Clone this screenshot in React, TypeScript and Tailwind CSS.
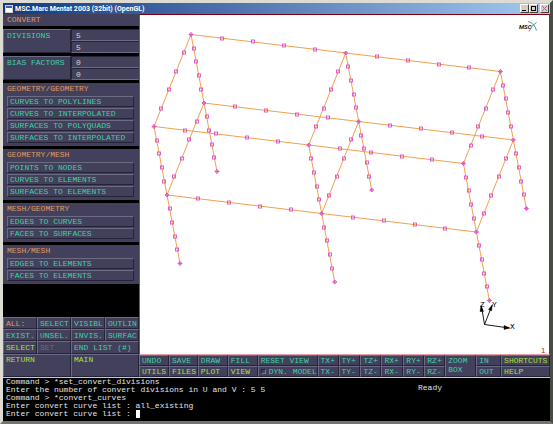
import { useState } from "react";

type Tone = "green" | "lime" | "orange" | "dim";
type Point = [number, number];

interface PanelButtonProps {
  label: string;
  tone?: Tone;
  className?: string;
}

interface FieldGroupProps {
  title: string;
  name: string;
  defaults: string[];
}

interface ConvertGroupProps {
  title: string;
  actions: string[];
}

const tones: Record<Tone, string> = {
  green: "text-[#3fd0a8]",
  lime: "text-[#a8e23c]",
  orange: "text-[#e09a62]",
  dim: "text-[#6c6a80]",
};

const bevel =
  "border border-t-[#6c6b85] border-l-[#6c6b85] border-r-[#24233a] border-b-[#24233a]";

const groups: ConvertGroupProps[] = [
  {
    title: "GEOMETRY/GEOMETRY",
    actions: [
      "CURVES TO POLYLINES",
      "CURVES TO INTERPOLATED",
      "SURFACES TO POLYQUADS",
      "SURFACES TO INTERPOLATED",
    ],
  },
  {
    title: "GEOMETRY/MESH",
    actions: ["POINTS TO NODES", "CURVES TO ELEMENTS", "SURFACES TO ELEMENTS"],
  },
  {
    title: "MESH/GEOMETRY",
    actions: ["EDGES TO CURVES", "FACES TO SURFACES"],
  },
  {
    title: "MESH/MESH",
    actions: ["EDGES TO ELEMENTS", "FACES TO ELEMENTS"],
  },
];

// Labels on the narrow buttons hold six characters
const selectors: PanelButtonProps[] = [
  { label: "ALL:", tone: "orange" },
  { label: "SELECT" },
  { label: "VISIBL" },
  { label: "OUTLIN" },
  { label: "EXIST." },
  { label: "UNSEL." },
  { label: "INVIS." },
  { label: "SURFAC" },
  { label: "SELECT", tone: "lime" },
  { label: "SET", tone: "dim" },
  { label: "END LIST (#)", className: "col-span-2" },
  { label: "RETURN", tone: "lime", className: "col-span-2 items-start" },
  { label: "MAIN", tone: "lime", className: "col-span-2 items-start" },
];

const axes = ["TX", "TY", "TZ", "RX", "RY", "RZ"];

// One frame of the structure; the other two are the same frame shifted by BAY
const frame: Record<string, Point> = {
  ridge: [191, 34],
  rearMid: [204, 102.5],
  rearFoot: [217, 171],
  eave: [154, 126],
  frontMid: [167, 194.5],
  frontFoot: [180, 263],
};
const BAY: Point = [154.7, 18.5];
const DIVISIONS = 5;

const frameMembers = [
  ["ridge", "rearMid"],
  ["rearMid", "rearFoot"],
  ["eave", "frontMid"],
  ["frontMid", "frontFoot"],
  ["ridge", "eave"],
  ["rearMid", "frontMid"],
];
const beams = ["ridge", "rearMid", "eave", "frontMid"];

const at = (name: string, bay: number): Point => [
  frame[name][0] + BAY[0] * bay,
  frame[name][1] + BAY[1] * bay,
];

const members: [Point, Point][] = [
  ...[0, 1, 2].flatMap((bay) =>
    frameMembers.map(([a, b]): [Point, Point] => [at(a, bay), at(b, bay)])
  ),
  ...[0, 1].flatMap((bay) =>
    beams.map((name): [Point, Point] => [at(name, bay), at(name, bay + 1)])
  ),
];

const joints = [0, 1, 2].flatMap((bay) =>
  Object.keys(frame).map((name) => at(name, bay))
);

function PanelButton({ label, tone = "green", className = "" }: PanelButtonProps) {
  return (
    <button
      type="button"
      className={`flex min-w-0 items-center overflow-hidden whitespace-nowrap bg-[#42405a] pl-[2px] text-left ${bevel} ${tones[tone]} ${className}`}
    >
      {label}
    </button>
  );
}

function FieldGroup({ title, name, defaults }: FieldGroupProps) {
  const [values, setValues] = useState<string[]>(defaults);

  return (
    <div className="grid grid-cols-2 bg-[#42405a]">
      <label
        htmlFor={`${name}-0`}
        className={`row-span-2 whitespace-nowrap pl-[3px] pt-px ${bevel} ${tones.green}`}
      >
        {title}
      </label>
      {values.map((value, i) => (
        <input
          key={i}
          id={`${name}-${i}`}
          aria-label={`${title} ${i + 1}`}
          value={value}
          onChange={(e) =>
            setValues(values.map((v, j) => (j === i ? e.target.value : v)))
          }
          className="h-3 w-full min-w-0 border border-t-[#24233a] border-l-[#24233a] border-r-[#42405a] border-b-[#6c6b85] bg-[#42405a] pl-1 text-[#d4d4dc] outline-none"
        />
      ))}
    </div>
  );
}

function ConvertGroup({ title, actions }: ConvertGroupProps) {
  return (
    <section className="bg-[#42405a] pb-[3px]">
      <h2 className={`h-[13px] pl-1 leading-[12px] ${tones.orange}`}>{title}</h2>
      <div className="flex flex-col gap-px pl-1 pr-[5px]">
        {actions.map((action) => (
          <PanelButton key={action} label={action} className="h-[11px]" />
        ))}
      </div>
    </section>
  );
}

function TitleBar() {
  const control =
    "flex h-[9px] w-[9px] items-center justify-center border border-t-white border-l-white border-r-[#404040] border-b-[#404040] bg-[#d4d0c8]";

  return (
    <header className="flex h-[11px] items-center bg-linear-to-r from-[#143880] to-[#a6caf0] pl-[2px] pr-px">
      <svg viewBox="0 0 8 8" className="h-2 w-2">
        <rect width="8" height="8" fill="#d4d0c8" />
        <rect x="1" y="1" width="6" height="2" fill="#3a62b0" />
        <rect x="1" y="3" width="6" height="4" fill="#fff" />
      </svg>
      <h1 className="flex-1 whitespace-nowrap pl-[2px] font-[Roboto,sans-serif] text-[7px] font-bold leading-[10px] text-white">
        MSC.Marc Mentat 2003 (32bit) (OpenGL)
      </h1>
      <button type="button" aria-label="Minimize" className={control}>
        <svg viewBox="0 0 7 7" className="h-[7px] w-[7px]">
          <path d="M1 5.5h4" stroke="#000" />
        </svg>
      </button>
      <button type="button" aria-label="Maximize" className={control}>
        <svg viewBox="0 0 7 7" className="h-[7px] w-[7px]">
          <path d="M1 1.5h5M1.5 1v5M5.5 1v5M1 5.5h5" stroke="#000" fill="none" />
        </svg>
      </button>
      <button type="button" aria-label="Close" className={`ml-[2px] ${control}`}>
        <svg viewBox="0 0 7 7" className="h-[7px] w-[7px]">
          <path d="M1 1l5 5M6 1l-5 5" stroke="#a07080" />
        </svg>
      </button>
    </header>
  );
}

function Viewport() {
  return (
    <svg
      viewBox="140 15 409 338"
      role="img"
      aria-label="Frame model"
      className="h-full w-full"
    >
      <g stroke="#f0a050" strokeWidth="1">
        {members.map(([a, b], i) => (
          <line key={i} x1={a[0]} y1={a[1]} x2={b[0]} y2={b[1]} />
        ))}
      </g>
      <g fill="none" stroke="#dc50c8" strokeWidth="0.9">
        {members.map(([a, b], i) =>
          Array.from({ length: DIVISIONS - 1 }, (_, k) => {
            const t = (k + 1) / DIVISIONS;
            const x = a[0] + (b[0] - a[0]) * t;
            const y = a[1] + (b[1] - a[1]) * t;
            return (
              <rect
                key={`${i}-${k}`}
                x={Math.round(x - 2) + 0.5}
                y={Math.round(y - 2) + 0.5}
                width="3"
                height="3"
              />
            );
          })
        )}
        {joints.map(([x, y], i) => (
          <path key={i} d={`M${x - 2} ${y}l2 -2l2 2l-2 2zM${x - 2} ${y}h4M${x} ${y - 2}v4`} />
        ))}
      </g>

      {/* Axis triad */}
      <g stroke="#000" strokeWidth="0.9" fill="#000">
        <path d="M484.5 324L481.5 306M484.5 324L492 305M484.5 324L509 327.500" fill="none" />
        <path d="M481 305l-1 6h3.500zM492.500 304l-4 5l3 1.500zM510 327.500l-6 -2.500v4z" strokeWidth="0.4" />
      </g>
      <g className="font-['Liberation_Mono',monospace] text-[8px]" fill="#000">
        <text x="480" y="306">Z</text>
        <text x="492" y="306">Y</text>
        <text x="510" y="328">X</text>
      </g>
      <text x="541" y="352" className="fill-[#d81818] font-['Liberation_Sans',sans-serif] text-[8px]">
        1
      </text>

      {/* MSC logo */}
      <text
        x="519"
        y="28"
        className="font-[Roboto,sans-serif] text-[6px] font-bold italic"
        fill="#181818"
      >
        MSC
      </text>
      <g fill="none" stroke="#4a9aa8" strokeWidth="1">
        <path d="M528 21Q534 22 536.500 30" />
        <path d="M536.500 22Q532 24 529 31" />
      </g>
    </svg>
  );
}

function CommandBar() {
  const [dynModel, setDynModel] = useState<boolean>(false);

  return (
    <nav className="grid grid-cols-[30fr_29fr_30fr_30fr_60fr_21fr_22fr_21fr_22fr_21fr_21fr_31fr_25fr_49fr] grid-rows-[11px_11px] bg-[#24233a]">
      <PanelButton label="UNDO" />
      <PanelButton label="SAVE" />
      <PanelButton label="DRAW" />
      <PanelButton label="FILL" />
      <PanelButton label="RESET VIEW" />
      {axes.map((axis) => (
        <PanelButton key={axis} label={`${axis}+`} />
      ))}
      <PanelButton label="ZOOM BOX" className="row-span-2 items-start whitespace-normal!" />
      <PanelButton label="IN" />
      <PanelButton label="SHORTCUTS" tone="lime" />
      <PanelButton label="UTILS" tone="lime" />
      <PanelButton label="FILES" tone="lime" />
      <PanelButton label="PLOT" tone="lime" />
      <PanelButton label="VIEW" tone="lime" />
      <label
        className={`flex min-w-0 items-center gap-[3px] overflow-hidden whitespace-nowrap bg-[#42405a] pl-[2px] ${bevel} ${tones.green}`}
      >
        <input
          type="checkbox"
          checked={dynModel}
          onChange={(e) => setDynModel(e.target.checked)}
          className="h-[5px] w-[5px] shrink-0 appearance-none border border-[#24233a] border-r-[#7c7b95] border-b-[#7c7b95] checked:bg-[#3fd0a8]"
        />
        DYN. MODEL
      </label>
      {axes.map((axis) => (
        <PanelButton key={axis} label={`${axis}-`} />
      ))}
      <PanelButton label="OUT" />
      <PanelButton label="HELP" tone="lime" />
    </nav>
  );
}

function Console() {
  return (
    <footer className="flex h-[44px] overflow-hidden border-t border-[#c8c8c8] bg-black pl-[3px] text-[#e4e4e4]">
      <div className="w-[412px] whitespace-pre leading-[8px]">
        <p>{"Command > *set_convert_divisions"}</p>
        <p>{"Enter the number of convert divisions in U and V : 5 5"}</p>
        <p>{"Command > *convert_curves"}</p>
        <p>{"Enter convert curve list : all_existing"}</p>
        <p>
          {"Enter convert curve list : "}
          <span className="inline-block h-2 w-1 bg-white align-top" />
        </p>
      </div>
      <p className="pt-[6px] leading-[8px]">Ready</p>
    </footer>
  );
}

function App() {
  return (
    <div className="flex min-h-screen flex-col border-x-[3px] border-y-[3px] border-l-[#dcdcd4] border-t-[#dcdcd4] border-r-[#484c44] border-b-[#747470] bg-black font-['Liberation_Mono',monospace] text-[8px] leading-[9px]">
      <TitleBar />
      <main className="flex flex-1">
        <aside className="flex w-[136px] shrink-0 flex-col gap-[3px]">
          <h2 className={`h-3 bg-[#42405a] pl-1 leading-[12px] ${tones.orange}`}>CONVERT</h2>
          <FieldGroup title="DIVISIONS" name="divisions" defaults={["5", "5"]} />
          <FieldGroup title="BIAS FACTORS" name="bias" defaults={["0", "0"]} />
          {groups.map((group) => (
            <ConvertGroup key={group.title} {...group} />
          ))}
          <div className="mt-auto grid grid-cols-4 grid-rows-[12px_12px_13px_23px]">
            {selectors.map((selector, i) => (
              <PanelButton key={i} {...selector} />
            ))}
          </div>
        </aside>
        <div className="flex min-w-0 flex-1 flex-col">
          <div className="min-h-0 flex-1 border border-t-[#800010] border-l-[#d03050] border-r-[#c01020] border-b-[#e8a0a8] bg-white">
            <Viewport />
          </div>
          <CommandBar />
        </div>
      </main>
      <Console />
    </div>
  );
}

export default App;
